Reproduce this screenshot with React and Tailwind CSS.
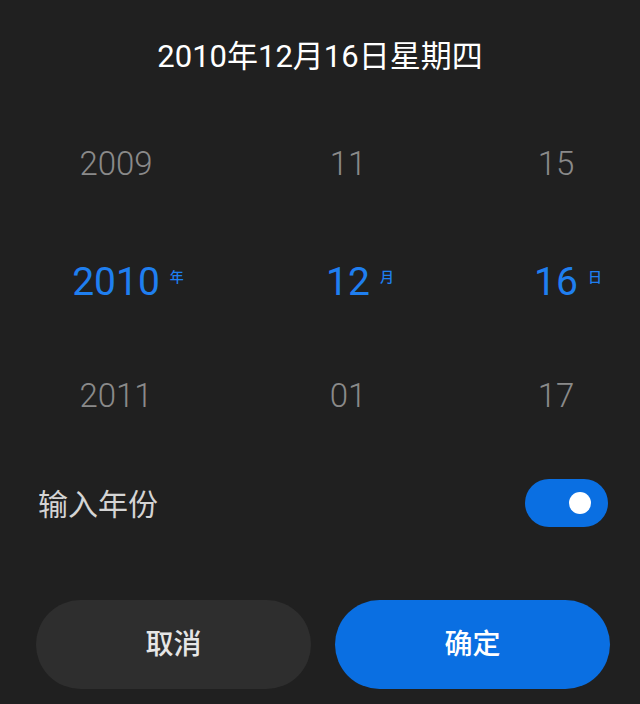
const font = { fontFamily: 'Roboto, "Noto Sans CJK SC", sans-serif' };

const columns = [
  { prev: '2009', value: '2010', next: '2011', unit: '年', width: 'w-[232px]' },
  { prev: '11', value: '12', next: '01', unit: '月', width: 'w-[232px]' },
  { prev: '15', value: '16', next: '17', unit: '日', width: 'w-[176px] pl-[8px]' },
];

const PickerColumn = ({ prev, value, next, unit, width }) => (
  <div className={`${width} flex flex-col items-center`}>
    <div className="h-[116px] flex items-center justify-center text-[33px] font-light text-[#8a8a8a]">
      {prev}
    </div>
    <div className="h-[116px] flex items-center justify-center pt-[5px]">
      <span className="relative text-[39px] font-normal leading-none text-[#1f7ff0]">
        {value}
        <span className="absolute left-full ml-[10px] top-[7px] text-[14px] font-medium leading-none text-[#1f7ff0]">
          {unit}
        </span>
      </span>
    </div>
    <div className="h-[116px] flex items-center justify-center text-[33px] font-light text-[#8a8a8a]">
      {next}
    </div>
  </div>
);

export default function App() {
  return (
    <div className="w-[640px] h-[704px] bg-[#202020] flex flex-col overflow-hidden" style={font}>
      {/* Title */}
      <div className="pt-[37px] h-[77px] text-center text-[31px] leading-[40px] font-normal text-white">
        2010年12月16日星期四
      </div>

      {/* Picker */}
      <div className="mt-[29px] flex">
        {columns.map((c) => (
          <PickerColumn key={c.unit} {...c} />
        ))}
      </div>

      {/* Toggle row */}
      <div className="mt-[25px] h-[48px] flex items-center justify-between pl-[38px] pr-[32px]">
        <span className="text-[30px] pt-[3px] text-[#d4d4d4]">输入年份</span>
        <div className="w-[83px] h-[48px] rounded-full bg-[#0a6fe2] flex items-center justify-end pr-[17px]">
          <div className="w-[22px] h-[22px] rounded-full bg-white" />
        </div>
      </div>

      {/* Buttons */}
      <div className="mt-[73px] flex gap-[24px] pl-[36px]">
        <button className="w-[275px] h-[89px] rounded-full bg-[#2e2e2e] text-[28px] font-medium text-[#e6e6e6]">
          取消
        </button>
        <button className="w-[275px] h-[89px] rounded-full bg-[#0a6fe2] text-[28px] font-medium text-white">
          确定
        </button>
      </div>
    </div>
  );
}
